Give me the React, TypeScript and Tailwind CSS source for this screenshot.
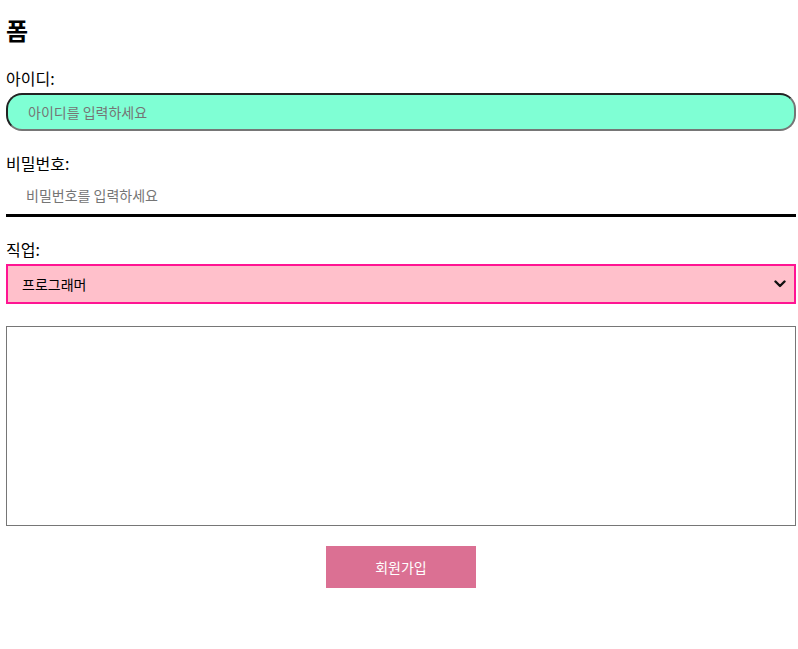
import { useState } from 'react';

const font = { fontFamily: '"Noto Sans CJK KR", "Noto Sans", sans-serif' };

export default function App() {
  const [form, setForm] = useState({ id: '', password: '', job: 'programmer', memo: '' });

  return (
    <div className="pt-[14px] pr-[2px] pl-[6px] text-black" style={font}>
      <h1 className="text-2xl leading-8 font-bold">폼</h1>
      <form
        className="flex flex-col"
        onSubmit={(event) => {
          event.preventDefault();
        }}
      >
        <label htmlFor="user-id" className="mt-[20px] text-base leading-6">
          아이디:
        </label>
        <input
          id="user-id"
          value={form.id}
          placeholder="아이디를 입력하세요"
          onChange={(event) => {
            const id = event.currentTarget.value;
            setForm((prev) => ({ ...prev, id }));
          }}
          className="mt-[3px] h-[38px] w-full rounded-[16px] border-2 border-t-[#222] border-l-[#222] border-r-[#767676] border-b-[#767676] bg-[#7fffd4] px-[20px] text-sm outline-none placeholder:text-[#757575]"
        />

        <label htmlFor="user-pw" className="mt-[20px] text-base leading-6">
          비밀번호:
        </label>
        <input
          id="user-pw"
          type="password"
          value={form.password}
          placeholder="비밀번호를 입력하세요"
          onChange={(event) => {
            const password = event.currentTarget.value;
            setForm((prev) => ({ ...prev, password }));
          }}
          className="mt-px h-[41px] w-full border-b-[3px] border-black px-[20px] text-sm outline-none placeholder:text-[#757575]"
        />

        <label htmlFor="user-job" className="mt-[20px] text-base leading-6">
          직업:
        </label>
        <div className="relative mt-[3px]">
          <select
            id="user-job"
            value={form.job}
            onChange={(event) => {
              const job = event.currentTarget.value;
              setForm((prev) => ({ ...prev, job }));
            }}
            className="block h-[40px] w-full appearance-none border-2 border-[#ff1493] bg-[#ffc0cb] pr-[30px] pl-[14px] text-sm outline-none"
          >
            <option value="programmer">프로그래머</option>
            <option value="designer">디자이너</option>
            <option value="planner">기획자</option>
          </select>
          <svg
            className="pointer-events-none absolute top-[16px] right-[10px]"
            width="12"
            height="8"
            viewBox="0 0 12 8"
            fill="none"
            stroke="#111"
            strokeWidth="2.4"
            strokeLinecap="round"
            strokeLinejoin="round"
          >
            <path d="M1.5 1.5 6 6l4.5-4.5" />
          </svg>
        </div>

        <textarea
          value={form.memo}
          onChange={(event) => {
            const memo = event.currentTarget.value;
            setForm((prev) => ({ ...prev, memo }));
          }}
          className="mt-[22px] h-[200px] w-full resize-none border border-[#767676] p-2 text-sm outline-none"
        />

        <button
          type="submit"
          className="mx-auto mt-[20px] h-[42px] w-[150px] bg-[#db7093] text-sm text-white"
        >
          회원가입
        </button>
      </form>
    </div>
  );
}
